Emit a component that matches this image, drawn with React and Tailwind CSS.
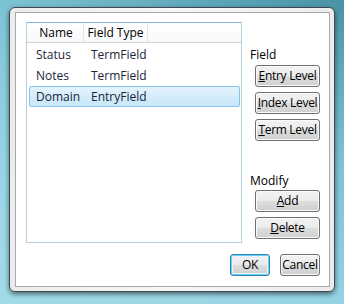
import React from "react";

const rows = [
  { name: "Status", type: "TermField" },
  { name: "Notes", type: "TermField" },
  { name: "Domain", type: "EntryField", selected: true },
];

const btnBase =
  "flex items-center justify-center h-[22px] rounded-[3px] border text-[12px] tracking-[-0.3px] text-black bg-[linear-gradient(#f2f2f2_0%,#ebebeb_50%,#dddddd_51%,#cfcfcf_100%)]";

function Btn({ children, w = "w-[65px]", def = false }) {
  return (
    <div
      className={
        btnBase +
        " " +
        w +
        (def
          ? " border-[#3c7fb1] shadow-[inset_0_0_0_1px_#5fd2f5,inset_0_0_0_2px_#e9f7fd]"
          : " border-[#707070] shadow-[inset_0_0_0_1px_#fbfbfb]")
      }
    >
      {children}
    </div>
  );
}

export default function App() {
  return (
    <div
      className="w-[344px] h-[304px] overflow-hidden pl-[9px] pt-[7px] bg-[linear-gradient(205deg,#4a93a6_0%,#7cc3d5_35%,#98d5e4_70%,#a2dbe8_100%)]"
      style={{ fontFamily: '"Segoe UI", "Open Sans", "Noto Sans", sans-serif' }}
    >
      {/* window frame */}
      <div className="w-[326px] h-[285px] rounded-[6px] border border-[#3d4a52] bg-[linear-gradient(90deg,#ececec,#f7f7f7_50%,#ececec)] pl-[5px] pt-[4px] shadow-[0_2px_5px_rgba(0,0,0,0.55)]">
        {/* client area */}
        <div className="w-[315px] h-[275px] border border-[#a9a9a9] bg-white pl-[10px] pt-[9px]">
          <div className="flex">
            {/* list */}
            <div className="w-[216px] h-[221px] border border-[#b4cfe0] border-t-[#8bb3d6]">
              <div className="flex h-[20px] border-b border-[#d5d5d5] bg-[linear-gradient(#ffffff,#f7f8f9)] text-[12px] text-black">
                <div className="w-[57px] border-r border-[#e3e5e8] flex items-center justify-center pl-[2px]">
                  Name
                </div>
                <div className="w-[64px] border-r border-[#e3e5e8] flex items-center justify-center">
                  Field Type
                </div>
                <div className="flex-1" />
              </div>
              <div className="pt-[1px]">
                {rows.map((r) => (
                  <div
                    key={r.name}
                    className={
                      "flex items-center h-[21px] ml-[2px] mr-[1px] text-[12px] text-[#1b2438] " +
                      (r.selected
                        ? "rounded-[2px] border border-[#84c5ea] bg-[linear-gradient(#e4f4fd,#c6e6f8)]"
                        : "border border-transparent")
                    }
                  >
                    <div className="w-[61px] pl-[6px]">{r.name}</div>
                    <div>{r.type}</div>
                  </div>
                ))}
              </div>
            </div>

            {/* right column */}
            <div className="ml-[8px] pt-[25px] flex flex-col text-[12px] text-black">
              <div className="h-[16px] leading-[16px]">Field</div>
              <div className="ml-[5px] mt-[2px] flex flex-col gap-[5px]">
                <Btn>
                  <u>E</u>ntry Level
                </Btn>
                <Btn>
                  <u>I</u>ndex Level
                </Btn>
                <Btn>
                  <u>T</u>erm Level
                </Btn>
              </div>
              <div className="h-[16px] leading-[16px] mt-[32px]">Modify</div>
              <div className="ml-[5px] mt-[1px] flex flex-col gap-[5px]">
                <Btn>
                  <u>A</u>dd
                </Btn>
                <Btn>
                  <u>D</u>elete
                </Btn>
              </div>
            </div>
          </div>

          {/* dialog buttons */}
          <div className="flex justify-end gap-[10px] w-[294px] mt-[11px]">
            <Btn w="w-[40px]" def>
              OK
            </Btn>
            <Btn w="w-[40px]">Cancel</Btn>
          </div>
        </div>
      </div>
    </div>
  );
}
